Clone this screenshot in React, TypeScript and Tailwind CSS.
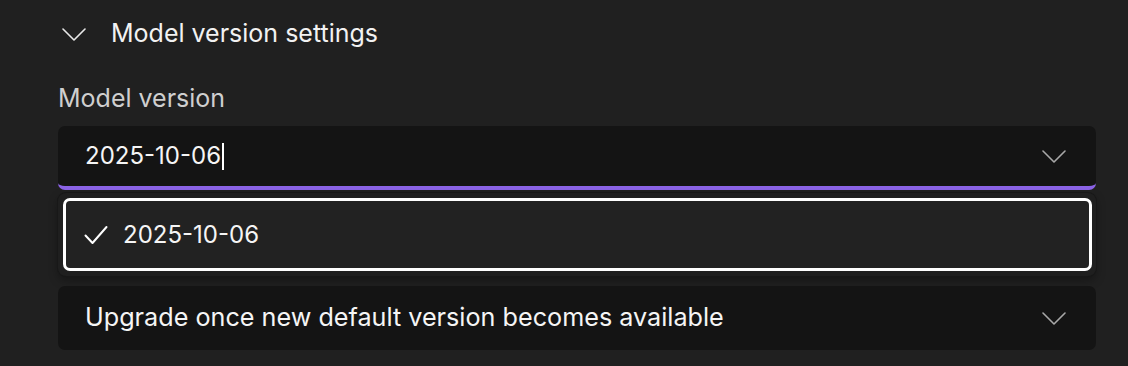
import React from "react";

const Chevron = ({ className }: { className?: string }) => (
  <svg className={className} viewBox="0 0 24 13" fill="none" stroke="currentColor" strokeWidth="1.6" strokeLinecap="round" strokeLinejoin="round">
    <path d="M1 1l11 11L23 1" />
  </svg>
);

const Check = () => (
  <svg className="w-[24px] h-[20px]" viewBox="0 0 24 20" fill="none" stroke="currentColor" strokeWidth="2" strokeLinecap="round" strokeLinejoin="round">
    <path d="M1.5 10.5l7 7.5L22.5 2" />
  </svg>
);

export default function App() {
  return (
    <div
      className="w-[1128px] h-[366px] bg-[#202020] text-white overflow-hidden pl-[58px] pr-[32px]"
      style={{ fontFamily: "Inter, 'Noto Sans', sans-serif" }}
    >
      <div className="flex items-center h-[68px] pl-[4px]">
        <Chevron className="w-[24px] h-[13px] text-[#e8e8e8]" />
        <span className="ml-[25px] text-[25px] text-[#f2f2f2]">Model version settings</span>
      </div>
      <div className="h-[58px] flex items-center pt-[4px] text-[25px] text-[#cfcfcf]">Model version</div>
      <div className="h-[64px] bg-[#141414] rounded-[7px] border-b-[4px] border-[#8b63e6] flex items-center pl-[27px] pr-[30px]">
        <span className="text-[24px] text-[#f5f5f5]">2025-10-06</span>
        <span className="w-[2px] h-[27px] bg-white ml-[1px]"></span>
        <Chevron className="ml-auto w-[24px] h-[13px] text-[#a8a8a8]" />
      </div>
      <div className="mt-[3px] h-[83px] bg-[#1f1f1f] rounded-[8px] shadow-[0_0_0_1px_#181818,0_4px_10px_rgba(0,0,0,0.35)] p-[5px] pr-[4px]">
        <div className="h-full border-[3px] border-white rounded-[7px] bg-[#222222] flex items-center pl-[18px]">
          <Check />
          <span className="ml-[15px] text-[24px] text-[#f5f5f5]">2025-10-06</span>
        </div>
      </div>
      <div className="mt-[10px] h-[64px] bg-[#141414] rounded-[7px] flex items-center pl-[27px] pr-[30px]">
        <span className="text-[25.2px] text-[#f5f5f5]">Upgrade once new default version becomes available</span>
        <Chevron className="ml-auto w-[24px] h-[13px] text-[#a8a8a8]" />
      </div>
    </div>
  );
}
